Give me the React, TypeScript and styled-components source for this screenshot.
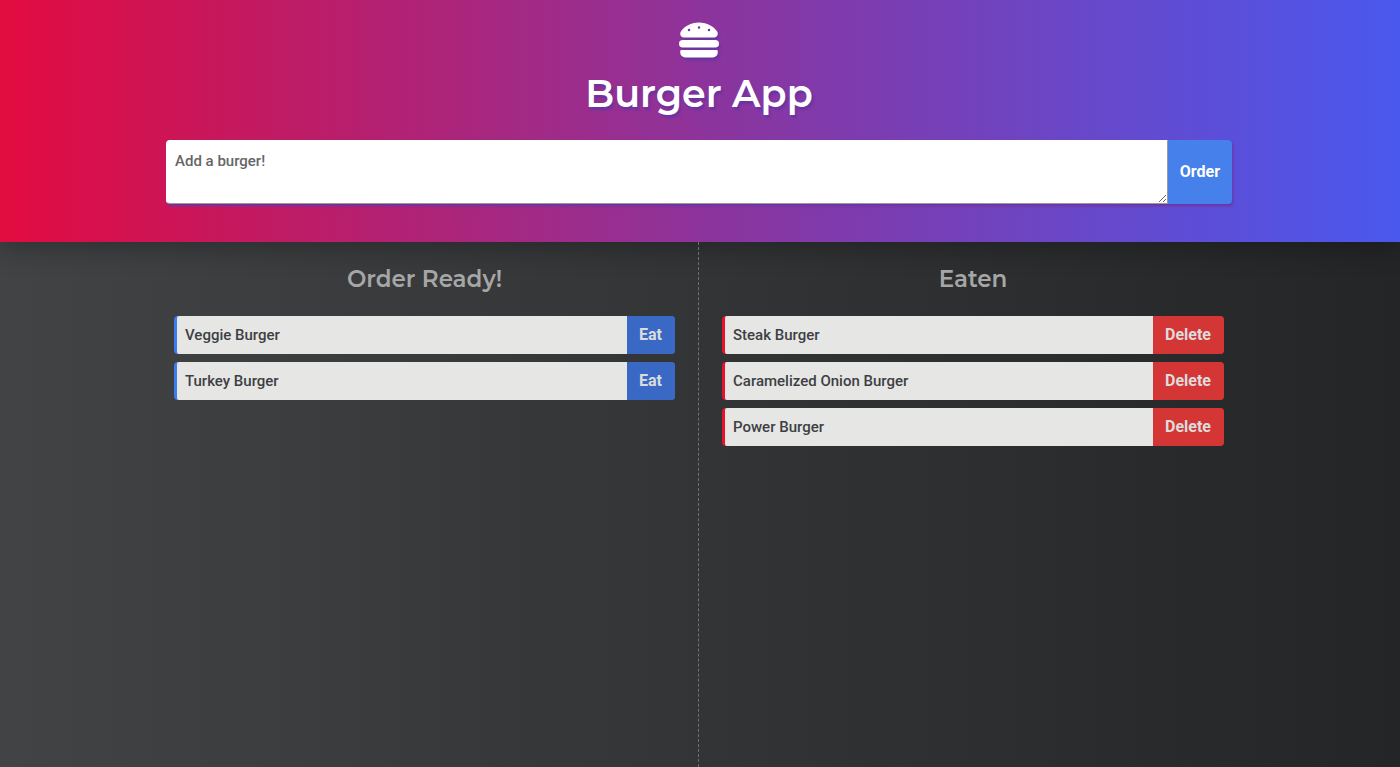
import React from "react";
import styled, { createGlobalStyle } from "styled-components";
import { FaHamburger } from "react-icons/fa";

const GlobalStyle = createGlobalStyle`
  *, *::before, *::after { box-sizing: border-box; }
  body {
    margin: 0;
    font: 500 15px/24px Roboto, "Liberation Sans", sans-serif;
    color: #3d3f44;
    background: #27282a;
  }
  button, textarea { font: inherit; }
`;

const Page = styled.div`
  display: flex;
  flex-direction: column;
  min-height: 100vh;
  background: linear-gradient(to right, #414345, #232526);
`;

const Header = styled.header`
  display: flex;
  flex-direction: column;
  align-items: center;
  padding: 20px 18px 38px 16px;
  background: linear-gradient(to right, #e20b40 0%, #8a359f 52%, #4a58ee 100%);
  box-shadow: 0 8px 24px rgba(0, 0, 0, 0.25);
`;

const Logo = styled(FaHamburger)`
  width: 40px;
  height: 40px;
  color: #fff;
  filter: drop-shadow(2px 3px 1px #6c349f);
`;

const Title = styled.h1`
  margin: 8px 0 20px;
  font: 600 38px/52px Montserrat, Inter, sans-serif;
  color: #fff;
  text-shadow: 2px 3px 2px #6c349f;
`;

const OrderForm = styled.form`
  display: flex;
  width: 100%;
  max-width: 1066px;
  height: 64px;
  border-radius: 4px;
  box-shadow: 1px 2px 3px #6c349f;
`;

const OrderInput = styled.textarea`
  flex: 1;
  min-width: 0;
  height: 64px;
  padding: 8px;
  border: 1px solid #999;
  border-top-color: #fff;
  border-left-color: #fff;
  border-radius: 4px 0 0 4px;
  background: #fff;
  outline: none;
  &::placeholder { color: #666; }
`;

const Button = styled.button<{ $bg: string; $fg: string }>`
  flex: none;
  padding: 0 12px;
  border: 0;
  border-radius: 0 4px 4px 0;
  background: ${(p) => p.$bg};
  color: ${(p) => p.$fg};
  font-size: 16px;
  font-weight: 700;
  cursor: pointer;
`;

const RowButton = styled(Button)`
  padding: 0 13px 0 12px;
`;

const Board = styled.main`
  flex: 1;
  display: flex;
  justify-content: center;
  padding: 0 2px 0 0;
`;

const Column = styled.section`
  flex: 1;
  min-width: 0;
  max-width: 549px;
  padding: 22px 24px 22px 23px;
  &:first-child {
    padding: 22px 23px 22px 24px;
    border-right: 1px dashed #707173;
  }
`;

const ColumnTitle = styled.h2`
  margin: 0 0 22px;
  font: 600 23px/30px Montserrat, Inter, sans-serif;
  color: #a6a6a6;
  text-align: center;
`;

const List = styled.ul`
  display: grid;
  gap: 8px;
  margin: 0;
  padding: 0;
  list-style: none;
`;

const Row = styled.li<{ $accent: string }>`
  display: flex;
  height: 38px;
  border-left: 3px solid ${(p) => p.$accent};
  border-radius: 4px;
  background: ${(p) => p.$accent};
`;

const Name = styled.span`
  flex: 1;
  padding: 7px 8px;
  border-radius: 2px 0 0 2px;
  background: #e6e6e4;
`;

const ready = ["Veggie Burger", "Turkey Burger"];
const eaten = ["Steak Burger", "Caramelized Onion Burger", "Power Burger"];

export default function App() {
  return (
    <>
      <GlobalStyle />
      <Page>
        <Header>
          <Logo aria-hidden="true" />
          <Title>Burger App</Title>
          <OrderForm onSubmit={(e) => e.preventDefault()}>
            <OrderInput aria-label="Add a burger" placeholder="Add a burger!" />
            <Button type="submit" $bg="#4680ea" $fg="#fff">Order</Button>
          </OrderForm>
        </Header>
        <Board>
          <Column>
            <ColumnTitle>Order Ready!</ColumnTitle>
            <List>
              {ready.map((name) => (
                <Row key={name} $accent="#3b7cf0">
                  <Name>{name}</Name>
                  <RowButton type="button" $bg="#3969c4" $fg="#dcdcdc">Eat</RowButton>
                </Row>
              ))}
            </List>
          </Column>
          <Column>
            <ColumnTitle>Eaten</ColumnTitle>
            <List>
              {eaten.map((name) => (
                <Row key={name} $accent="#e8112d">
                  <Name>{name}</Name>
                  <RowButton type="button" $bg="#d43535" $fg="#dcdcdc">Delete</RowButton>
                </Row>
              ))}
            </List>
          </Column>
        </Board>
      </Page>
    </>
  );
}
